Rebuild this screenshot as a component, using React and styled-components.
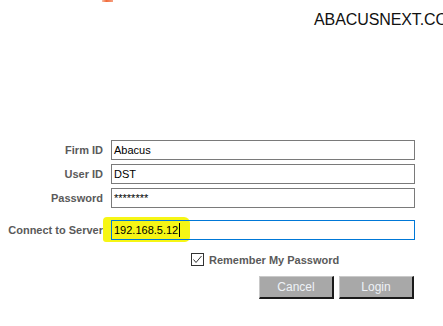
import React from "react";
import styled, { createGlobalStyle } from "styled-components";

const GlobalStyle = createGlobalStyle`
  html, body {
    margin: 0;
    padding: 0;
    background: #ffffff;
  }
  body {
    font-family: "Liberation Sans", Arial, sans-serif;
  }
`;

const Page = styled.div`
  width: 443px;
  height: 326px;
  overflow: hidden;
  background: #ffffff;
`;

const Header = styled.div`
  display: flex;
  align-items: flex-start;
  padding-left: 102px;
  height: 140px;
  white-space: nowrap;
`;

const LogoStub = styled.div`
  width: 11px;
  height: 2px;
  background: linear-gradient(90deg, #f7c3ad, #f26b3a 40%, #f5a284);
  flex-shrink: 0;
`;

const Brand = styled.div`
  margin-left: 201px;
  margin-top: 11px;
  font-size: 16px;
  line-height: 18px;
  color: #111111;
  letter-spacing: -0.1px;
`;

const Form = styled.div`
  display: flex;
  flex-direction: column;
  padding-right: 28px;
`;

const FieldRow = styled.div`
  display: grid;
  grid-template-columns: 103px 1fr;
  column-gap: 8px;
  align-items: center;
  height: 20px;
  margin-top: ${(p) => (p.$spaced ? "12px" : "4px")};
  &:first-child {
    margin-top: 0;
  }
`;

const Label = styled.div`
  text-align: right;
  font-size: 11px;
  font-weight: bold;
  color: #5a5a5a;
  white-space: nowrap;
`;

const FieldWrap = styled.div`
  position: relative;
  height: 20px;
`;

const Highlight = styled.div`
  position: absolute;
  left: -8px;
  top: -3px;
  width: 87px;
  height: 25px;
  background: #f6f615;
  border-radius: 4px 6px 5px 3px;
  z-index: 0;
`;

const Field = styled.div`
  position: relative;
  z-index: 1;
  box-sizing: border-box;
  height: 20px;
  border: 1px solid ${(p) => (p.$active ? "#0078d7" : "#7a7a7a")};
  background: transparent;
  padding-left: 2px;
  font-size: 11px;
  line-height: 18px;
  color: #000000;
  display: flex;
  align-items: center;
`;

const Caret = styled.span`
  display: inline-block;
  width: 1px;
  height: 14px;
  background: #000000;
  margin-left: 1px;
`;

const CheckRow = styled.label`
  display: flex;
  align-items: center;
  gap: 5px;
  padding-left: 191px;
  margin-top: 13px;
  height: 13px;
  font-size: 11px;
  font-weight: bold;
  color: #5a5a5a;
`;

const Box = styled.span`
  box-sizing: border-box;
  width: 13px;
  height: 13px;
  border: 1px solid #333333;
  background: #ffffff;
  display: flex;
  align-items: center;
  justify-content: center;
`;

const ButtonRow = styled.div`
  display: flex;
  justify-content: flex-end;
  gap: 5px;
  margin-top: 10px;
  padding-right: 29px;
`;

const Button = styled.button`
  box-sizing: border-box;
  width: 75px;
  height: 23px;
  padding: 0;
  background: #a8a8a8;
  border-top: 1px solid #c9c9c9;
  border-left: 1px solid #c9c9c9;
  border-right: 2px solid #1a1a1a;
  border-bottom: 2px solid #1a1a1a;
  font-family: "Liberation Sans", Arial, sans-serif;
  font-size: 12px;
  color: #eef2f7;
`;

export default function App() {
  return (
    <Page>
      <GlobalStyle />
      <Header>
        <LogoStub />
        <Brand>ABACUSNEXT.COM</Brand>
      </Header>
      <Form>
        <FieldRow>
          <Label>Firm ID</Label>
          <Field>Abacus</Field>
        </FieldRow>
        <FieldRow>
          <Label>User ID</Label>
          <Field>DST</Field>
        </FieldRow>
        <FieldRow>
          <Label>Password</Label>
          <Field>********</Field>
        </FieldRow>
        <FieldRow $spaced>
          <Label>Connect to Server</Label>
          <FieldWrap>
            <Highlight />
            <Field $active>
              192.168.5.12
              <Caret />
            </Field>
          </FieldWrap>
        </FieldRow>
      </Form>
      <CheckRow>
        <Box>
          <svg width="11" height="11" viewBox="0 0 11 11">
            <polyline
              points="1.5,5.5 4,8.5 9.5,2"
              fill="none"
              stroke="#333"
              strokeWidth="1"
            />
          </svg>
        </Box>
        Remember My Password
      </CheckRow>
      <ButtonRow>
        <Button>Cancel</Button>
        <Button>Login</Button>
      </ButtonRow>
    </Page>
  );
}
